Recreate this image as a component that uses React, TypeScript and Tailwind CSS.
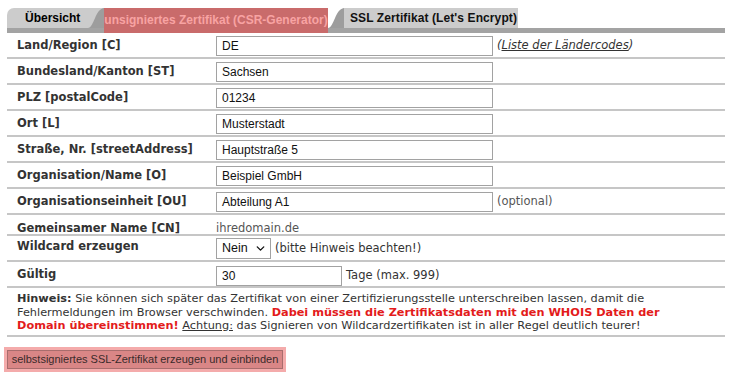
import { ChevronDown } from 'lucide-react'

const rows = [
  { label: 'Land/Region [C]', value: 'DE', note: 'laender' },
  { label: 'Bundesland/Kanton [ST]', value: 'Sachsen' },
  { label: 'PLZ [postalCode]', value: '01234' },
  { label: 'Ort [L]', value: 'Musterstadt' },
  { label: 'Straße, Nr. [streetAddress]', value: 'Hauptstraße 5' },
  { label: 'Organisation/Name [O]', value: 'Beispiel GmbH' },
  { label: 'Organisationseinheit [OU]', value: 'Abteilung A1', note: 'optional' },
]

const verdana = "font-['DejaVu_Sans',Verdana,sans-serif]"
const arial = "font-['Liberation_Sans',Arial,sans-serif]"

function TabSlope({ left }: { left: string }) {
  return (
    <svg width="16" height="20" viewBox="0 0 16 20" className="block shrink-0">
      <rect width="16" height="20" fill={left} />
      <path d="M0 20 C 6 20 7 1 16 0 L16 20 Z" fill="#9d9d9d" />
    </svg>
  )
}

function Input({ value, width = 'w-[277px]' }: { value: string; width?: string }) {
  return (
    <div
      className={`${width} h-[20px] border border-[#a2a2a2] bg-white px-[5px] flex items-center text-[12px] text-[#111] ${arial}`}
    >
      {value}
    </div>
  )
}

export default function App() {
  return (
    <div className={`w-[730px] h-[383px] bg-white overflow-hidden text-[#333] ${verdana}`}>
      {/* Tabs */}
      <div className="pl-[7px] pr-[5px] pt-[8px]">
        <div className="flex items-start h-[20px]">
          <div className={`w-[81px] h-[20px] bg-[#cccccc] rounded-tl-[7px] pl-[18px] flex items-center text-[12px] font-bold text-black ${arial}`}>
            Übersicht
          </div>
          <TabSlope left="#cccccc" />
          <div className={`relative z-10 w-[224px] h-[25px] bg-[#c96b6b] flex items-start justify-center pt-[3px] text-[12px] font-bold text-[#f8a3a3] ${arial}`}>
            unsigniertes Zertifikat (CSR-Generator)
          </div>
          <TabSlope left="#ffffff" />
          <div className={`w-[174px] h-[20px] bg-[#cccccc] pl-[6px] flex items-center text-[12px] font-bold text-[#111] tracking-[0.1px] ${arial}`}>
            SSL Zertifikat (Let's Encrypt)
          </div>
        </div>
        <div className="h-[5px] bg-[#a3a3a3]" />
      </div>

      {/* Form table */}
      <div className="ml-[7px] w-[718px]">
        {rows.map((row) => (
          <div key={row.label} className="flex items-center h-[26px] pt-[2px] border-b-2 border-[#c6c6c6]">
            <div className="w-[209px] pl-[10px] text-[11.5px] font-bold">{row.label}</div>
            <Input value={row.value} />
            {row.note === 'laender' && (
              <span className="ml-[4px] text-[11.5px] italic">
                (<span className="underline">Liste der Ländercodes</span>)
              </span>
            )}
            {row.note === 'optional' && <span className="ml-[4px] text-[11.5px] text-[#555]">(optional)</span>}
          </div>
        ))}

        <div className="flex items-center h-[21px] pt-[8px] border-b-2 border-[#c6c6c6]">
          <div className="w-[209px] pl-[10px] text-[11.5px] font-bold">Gemeinsamer Name [CN]</div>
          <span className="text-[11.5px] text-[#555]">ihredomain.de</span>
        </div>

        <div className="flex items-center h-[26px] pt-[1px] border-b-2 border-[#c6c6c6]">
          <div className="w-[209px] pl-[10px] pb-[3px] text-[11.5px] font-bold">Wildcard erzeugen</div>
          <div className={`w-[55px] h-[21px] border border-[#a2a2a2] bg-white pl-[5px] pr-[3px] flex items-center justify-between text-[12.5px] text-[#111] ${arial}`}>
            Nein
            <ChevronDown className="w-[13px] h-[13px]" strokeWidth={2.5} />
          </div>
          <span className="ml-[4px] text-[11.5px]">(bitte Hinweis beachten!)</span>
        </div>

        <div className="flex items-center h-[26px] pt-[3px] border-b-2 border-[#c6c6c6]">
          <div className="w-[209px] pl-[10px] pb-[1px] text-[11.5px] font-bold">Gültig</div>
          <Input value="30" width="w-[126px]" />
          <span className="ml-[4px] text-[11.5px]">Tage (max. 999)</span>
        </div>

        {/* Hinweis */}
        <div className="pl-[10px] pt-[4px] pb-[2px] border-b-2 border-[#c6c6c6] text-[11.3px] leading-[13.5px] whitespace-nowrap">
          <b>Hinweis:</b> Sie können sich später das Zertifikat von einer Zertifizierungsstelle unterschreiben lassen, damit die
          <br />
          Fehlermeldungen im Browser verschwinden.{' '}
          <b className="text-[#e31b1b]">Dabei müssen die Zertifikatsdaten mit den WHOIS Daten der</b>
          <br />
          <b className="text-[#e31b1b]">Domain übereinstimmen!</b> <span className="underline">Achtung:</span> das Signieren von
          Wildcardzertifikaten ist in aller Regel deutlich teurer!
        </div>
      </div>

      {/* Submit */}
      <div className="ml-[4px] mt-[10px] w-[282px] p-[3px] bg-[#f4abab]">
        <div
          className={`h-[19px] w-[276px] border border-[#a86d6d] bg-[#d98686] whitespace-nowrap flex items-center justify-center text-[11px] text-[#3a2a2a] ${arial}`}
        >
          selbstsigniertes SSL-Zertifikat erzeugen und einbinden
        </div>
      </div>
    </div>
  )
}
